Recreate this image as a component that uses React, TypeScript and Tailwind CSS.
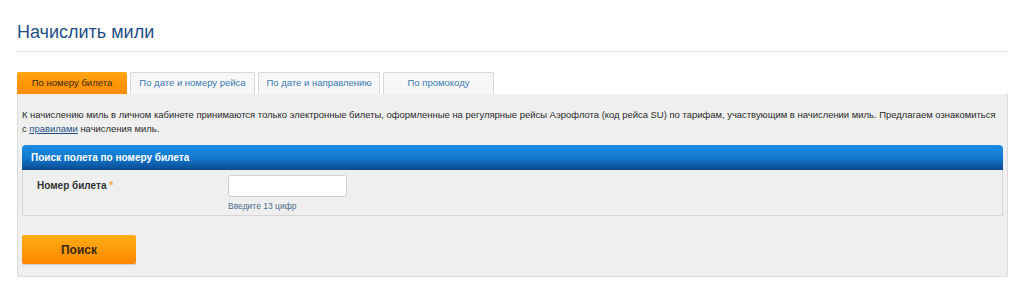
const tabs = [
  { label: "По номеру билета", width: "w-[110px]", active: true },
  { label: "По дате и номеру рейса", width: "w-[125px]" },
  { label: "По дате и направлению", width: "w-[122px]" },
  { label: "По промокоду", width: "w-[111px]" },
];

export default function App() {
  return (
    <div className="min-h-[291px] bg-white pl-[17px] pr-[16px] pt-[20px] font-['Liberation_Sans',Arial,sans-serif] text-[#333]">
      {/* Title */}
      <h1 className="text-[18px] leading-[24px] text-[#1f4f85]">Начислить мили</h1>
      <div className="mt-[7px] border-b border-dotted border-[#c8c8c8]" />

      {/* Tabs */}
      <div className="mt-[20px] flex gap-[3px]">
        {tabs.map((t) =>
          t.active ? (
            <div
              key={t.label}
              className={`${t.width} h-[22px] flex items-center justify-center whitespace-nowrap rounded-t-[2px] bg-gradient-to-b from-[#ffa412] to-[#ff8a00] text-[9.5px] text-[#3b2a10]`}
            >
              {t.label}
            </div>
          ) : (
            <div
              key={t.label}
              className={`${t.width} h-[22px] flex items-center justify-center whitespace-nowrap rounded-t-[2px] border border-b-0 border-[#d8d8d8] bg-[#f7f7f7] text-[9.5px] text-[#3b79b0]`}
            >
              {t.label}
            </div>
          )
        )}
      </div>

      {/* Panel */}
      <div className="h-[183px] rounded-b-[3px] border border-t-0 border-[#dcdcdc] bg-[#efefef] px-[4px] pt-[14px]">
        <p className="whitespace-nowrap text-[9.45px] leading-[14px] text-[#2a2a2a]">
          К начислению миль в личном кабинете принимаются только электронные билеты, оформленные на регулярные рейсы Аэрофлота (код рейса SU) по тарифам, участвующим в начислении миль. Предлагаем ознакомиться
          <br />с{" "}
          <a href="#" className="text-[#1f4f85] underline">
            правилами
          </a>{" "}
          начисления миль.
        </p>

        {/* Search block */}
        <div className="mt-[9px]">
          <div className="h-[25px] flex items-center rounded-t-[4px] bg-gradient-to-b from-[#1a8ce2] via-[#127ad0] to-[#0a4a90] pl-[9px] text-[10px] font-bold text-white">
            Поиск полета по номеру билета
          </div>
          <div className="h-[46px] flex border border-t-0 border-[#d6d6d6] bg-[#efefef]">
            <div className="w-[205px] pl-[14px] pt-[8px] text-[10px] font-bold text-[#333]">
              Номер билета <span className="text-[#f2a23a]">*</span>
            </div>
            <div className="pt-[5px]">
              <input className="block w-[119px] h-[22px] rounded-[3px] border border-[#cfcfcf] bg-white" />
              <div className="mt-[4px] text-[8.5px] leading-[10px] text-[#4c6c8c]">Введите 13 цифр</div>
            </div>
          </div>
        </div>

        {/* Button */}
        <button className="mt-[19px] w-[114px] h-[29px] rounded-[2px] bg-gradient-to-b from-[#ffac14] to-[#ff8700] text-[12px] font-bold text-[#3a2a12] shadow-[0_1px_1px_rgba(0,0,0,0.15)]">
          Поиск
        </button>
      </div>
    </div>
  );
}
